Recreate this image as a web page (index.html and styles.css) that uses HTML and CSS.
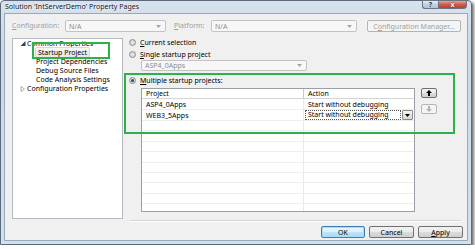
FILE: index.html
```html
<!DOCTYPE html>
<html lang="en">
<head>
    <meta charset="UTF-8">
    <title>Solution 'IntServerDemo' Property Pages</title>
    <link rel="stylesheet" href="styles.css">
</head>
<body>
    <div class="window">
        <div class="titlebar">
            <span class="title">Solution 'IntServerDemo' Property Pages</span>
            <div class="caption">
                <span class="cap help">?</span>
                <span class="cap close">x</span>
            </div>
        </div>

        <div class="client">
            <div class="config-row">
                <span class="label cfg-label disabled"><u>C</u>onfiguration:</span>
                <div class="combo disabled cfg-combo">
                    <span>N/A</span>
                    <svg class="arrow" width="5" height="3" viewBox="0 0 5 3"><path d="M0 0H5L2.5 3Z" fill="#a6a6a6"/></svg>
                </div>
                <span class="label plat-label disabled"><u>P</u>latform:</span>
                <div class="combo disabled plat-combo">
                    <span>N/A</span>
                    <svg class="arrow" width="5" height="3" viewBox="0 0 5 3"><path d="M0 0H5L2.5 3Z" fill="#a6a6a6"/></svg>
                </div>
                <button class="btn disabled mgr-btn">C<u>o</u>nfiguration Manager...</button>
            </div>

            <div class="main">
                <div class="tree">
                    <div class="node">
                        <svg class="twisty" width="5" height="5" viewBox="0 0 5 5"><path d="M5 0V5H0Z" fill="#404040"/></svg>
                        <span>Common Properties</span>
                    </div>
                    <div class="node child"><span class="selected">Startup Project</span></div>
                    <div class="node child"><span>Project Dependencies</span></div>
                    <div class="node child"><span>Debug Source Files</span></div>
                    <div class="node child"><span>Code Analysis Settings</span></div>
                    <div class="node">
                        <svg class="twisty" width="5" height="6" viewBox="0 0 5 6"><path d="M0.5 0.5L4 3L0.5 5.5Z" fill="none" stroke="#9a9a9a" stroke-width="0.8"/></svg>
                        <span>Configuration Properties</span>
                    </div>
                </div>

                <div class="page">
                    <div class="option first">
                        <span class="radio"></span>
                        <span><u>C</u>urrent selection</span>
                    </div>
                    <div class="option">
                        <span class="radio"></span>
                        <span><u>S</u>ingle startup project</span>
                    </div>
                    <div class="combo disabled single-combo">
                        <span>ASP4_0Apps</span>
                        <svg class="arrow" width="5" height="3" viewBox="0 0 5 3"><path d="M0 0H5L2.5 3Z" fill="#a6a6a6"/></svg>
                    </div>
                    <div class="option multi">
                        <span class="radio checked"></span>
                        <span><u>M</u>ultiple startup projects:</span>
                    </div>

                    <div class="grid-area">
                        <div class="grid">
                            <div class="grid-row head">
                                <div class="cell">Project</div>
                                <div class="cell">Action</div>
                            </div>
                            <div class="grid-row data">
                                <div class="cell">ASP4_0Apps</div>
                                <div class="cell">Start without debugging</div>
                            </div>
                            <div class="grid-row data">
                                <div class="cell">WEB3_5Apps</div>
                                <div class="cell">
                                    <div class="cell-combo">
                                        <span class="cell-text">Start without debugging</span>
                                        <span class="cell-drop">
                                            <svg width="5" height="3" viewBox="0 0 5 3"><path d="M0 0H5L2.5 3Z" fill="#000"/></svg>
                                        </span>
                                    </div>
                                </div>
                            </div>
                            <div class="grid-row empty"><div class="cell"></div><div class="cell"></div></div>
                            <div class="grid-row empty"><div class="cell"></div><div class="cell"></div></div>
                            <div class="grid-row empty"><div class="cell"></div><div class="cell"></div></div>
                            <div class="grid-row empty"><div class="cell"></div><div class="cell"></div></div>
                            <div class="grid-row empty"><div class="cell"></div><div class="cell"></div></div>
                            <div class="grid-row empty"><div class="cell"></div><div class="cell"></div></div>
                            <div class="grid-row empty"><div class="cell"></div><div class="cell"></div></div>
                            <div class="grid-row empty"><div class="cell"></div><div class="cell"></div></div>
                            <div class="grid-row empty"><div class="cell"></div><div class="cell"></div></div>
                        </div>
                        <div class="move-buttons">
                            <button class="btn move">
                                <svg width="6" height="6" viewBox="0 0 6 6"><path d="M3 0L6 3H4V6H2V3H0Z" fill="#000"/></svg>
                            </button>
                            <button class="btn move disabled">
                                <svg width="6" height="6" viewBox="0 0 6 6"><path d="M3 6L6 3H4V0H2V3H0Z" fill="#b4b4b4"/></svg>
                            </button>
                        </div>
                    </div>

                    <div class="separator"></div>
                </div>
            </div>

            <div class="footer">
                <button class="btn default ok-btn">OK</button>
                <button class="btn cancel-btn">Cancel</button>
                <button class="btn apply-btn"><u>A</u>pply</button>
            </div>
        </div>

        <!-- annotation boxes drawn over the screenshot -->
        <div class="mark mark-tree"></div>
        <div class="mark mark-multi"></div>
    </div>
</body>
</html>
```

FILE: styles.css
```css
/* General Styles */
body {
    margin: 0;
    background: #ffffff;
    font-family: "Noto Sans", "Open Sans", sans-serif;
    font-size: 7px;
    color: #000;
}

u {
    text-decoration-thickness: 0.5px;
    text-underline-offset: 1px;
}

.window {
    position: relative;
    width: 472px;
    height: 245px;
    box-sizing: border-box;
    border: 1px solid #5b6b7d;
    border-radius: 4px 4px 0 0;
    padding: 0 3px 3px;
    background: linear-gradient(#d7e2ee, #cbd9e8 20%, #d3dfeb);
    box-shadow: 2px 2px 3px rgba(0, 0, 0, 0.55);
    display: flex;
    flex-direction: column;
}

/* Title bar */
.titlebar {
    height: 12px;
    display: flex;
    justify-content: space-between;
    align-items: flex-start;
}

.title {
    padding-left: 1px;
    line-height: 12px;
    font-size: 7px;
    color: #111;
    text-shadow: 0 0 3px #fff, 0 0 2px #fff;
}

.caption {
    display: flex;
    margin-top: -1px;
    margin-right: 1px;
}

.cap {
    height: 9px;
    display: flex;
    align-items: center;
    justify-content: center;
    font-size: 7px;
    font-weight: bold;
    border: 1px solid #6a7482;
    box-sizing: border-box;
}

.help {
    width: 16px;
    border-radius: 0 0 0 3px;
    border-right: none;
    color: #2b3a4a;
    background: linear-gradient(#e9eef4, #c4d0dd 50%, #b5c3d2);
}

.close {
    width: 29px;
    border-radius: 0 0 3px 0;
    color: #fff;
    font-family: "DejaVu Sans", sans-serif;
    text-shadow: 0 0 2px #6b1a10;
    background: linear-gradient(#e8a493, #cf5b48 50%, #c0412c);
}

/* Client area */
.client {
    flex: 1;
    border: 1px solid #9aa9b9;
    background: #f0f0f0;
    padding: 6px 4px 2px 7px;
    display: flex;
    flex-direction: column;
}

.disabled {
    color: #a0a0a0;
}

.config-row {
    height: 12px;
    display: flex;
    align-items: center;
}

.label {
    line-height: 12px;
}

.cfg-label { width: 53px; }
.plat-label { width: 37px; margin-left: 8px; }

.combo {
    height: 12px;
    box-sizing: border-box;
    border: 1px solid #c3c3c3;
    border-radius: 2px;
    background: #f7f7f7;
    display: flex;
    align-items: center;
    justify-content: space-between;
    padding: 0 4px 0 3px;
    color: #6d6d6d;
}

.combo.disabled span {
    color: #8d8d8d;
}

.cfg-combo { width: 101px; }
.plat-combo { width: 146px; }

.btn {
    font-family: inherit;
    font-size: 7px;
    padding: 0;
    box-sizing: border-box;
    border: 1px solid #707070;
    border-radius: 2px;
    background: linear-gradient(#f2f2f2, #ebebeb 50%, #dddddd 51%, #cfcfcf);
    color: #000;
    display: flex;
    align-items: center;
    justify-content: center;
}

.btn.disabled {
    border-color: #b5b5b5;
    background: #f4f4f4;
    color: #a0a0a0;
}

.mgr-btn {
    width: 94px;
    height: 12px;
    margin-left: 10px;
}

/* Main area */
.main {
    height: 184px;
    margin-top: 6px;
    display: flex;
}

.tree {
    width: 111px;
    height: 181px;
    box-sizing: border-box;
    border: 1px solid #b5b9c0;
    background: #fff;
}

.node {
    height: 9px;
    line-height: 9px;
    display: flex;
    align-items: center;
    padding-left: 6px;
    white-space: nowrap;
}

.twisty {
    width: 8px;
}

.node.child {
    padding-left: 23px;
}

.node .selected {
    padding: 0 2px;
    line-height: 9px;
    border: 1px solid #d9d9d9;
    border-radius: 2px;
    background: linear-gradient(#f8f8f8, #e5e5e5);
    margin-left: -1px;
}

.page {
    flex: 1;
    margin-left: 6px;
    display: flex;
    flex-direction: column;
}

.option {
    height: 9px;
    display: flex;
    align-items: center;
    gap: 4px;
    margin-top: 3px;
}

.option.first {
    margin-top: 0;
}

.option.multi {
    margin-top: 5px;
}

.radio {
    width: 7px;
    height: 7px;
    box-sizing: border-box;
    border: 1px solid #8e8f8f;
    border-radius: 50%;
    background: radial-gradient(circle, #ececec, #c8c8c8);
    display: flex;
    align-items: center;
    justify-content: center;
}

.radio.checked::after {
    content: "";
    width: 3px;
    height: 3px;
    border-radius: 50%;
    background: #1d4d7a;
}

.single-combo {
    width: 166px;
    height: 11px;
    margin: 1px 0 0 12px;
}

/* Grid */
.grid-area {
    display: flex;
    gap: 6px;
    margin: 3px 0 0 12px;
}

.grid {
    width: 274px;
    height: 124px;
    box-sizing: border-box;
    border: 1px solid #9a9ea5;
    background: #fff;
    overflow: hidden;
}

.grid-row {
    display: grid;
    grid-template-columns: 162px 1fr;
    box-sizing: border-box;
    border-bottom: 1px solid #eeeeee;
}

.grid-row .cell {
    padding-left: 4px;
    white-space: nowrap;
    display: flex;
    align-items: center;
}

.grid-row .cell:first-child {
    border-right: 1px solid #e2ebf5;
}

.grid-row.head {
    height: 10px;
    border-bottom-color: #d5d5d5;
}

.grid-row.head .cell:first-child {
    border-right-color: #c9c9c9;
}

.grid-row.data {
    height: 11px;
}

.grid-row.empty {
    height: 10.4px;
}

.grid-row .cell:has(.cell-combo) {
    padding-left: 1px;
}

.cell-combo {
    width: 108px;
    height: 10px;
    display: flex;
}

.cell-text {
    flex: 1;
    padding-left: 2px;
    border: 1px dotted #555;
    line-height: 8px;
    background: #fff;
}

.cell-drop {
    width: 11px;
    margin-left: 1px;
    box-sizing: border-box;
    border: 1px solid #8a8a8a;
    border-radius: 1px;
    background: linear-gradient(#f4f4f4, #d8d8d8);
    display: flex;
    align-items: center;
    justify-content: center;
}

.move-buttons {
    display: flex;
    flex-direction: column;
    gap: 6px;
}

.btn.move {
    width: 16px;
    height: 10px;
}

.separator {
    margin: auto 2px 0 1px;
    height: 1px;
    background: #d4d4d4;
    border-bottom: 1px solid #fff;
}

/* Dialog buttons */
.footer {
    margin-top: 4px;
    display: flex;
    justify-content: flex-end;
    gap: 4px;
}

.footer .btn {
    height: 12px;
}

.ok-btn { width: 44px; }
.cancel-btn { width: 45px; }
.apply-btn { width: 45px; }

.btn.default {
    border-color: #3c7fb1;
    box-shadow: inset 0 0 0 1px #a8dcf6;
    background: linear-gradient(#eaf6fd, #d9f0fc 50%, #bee6fd 51%, #a7d9f5);
}

/* Annotation marks */
.mark {
    position: absolute;
    border: 2px solid #2cb24a;
    box-sizing: border-box;
}

.mark-tree {
    left: 31px;
    top: 41px;
    width: 78px;
    height: 17px;
}

.mark-multi {
    left: 123px;
    top: 72px;
    width: 331px;
    height: 61px;
}
```
